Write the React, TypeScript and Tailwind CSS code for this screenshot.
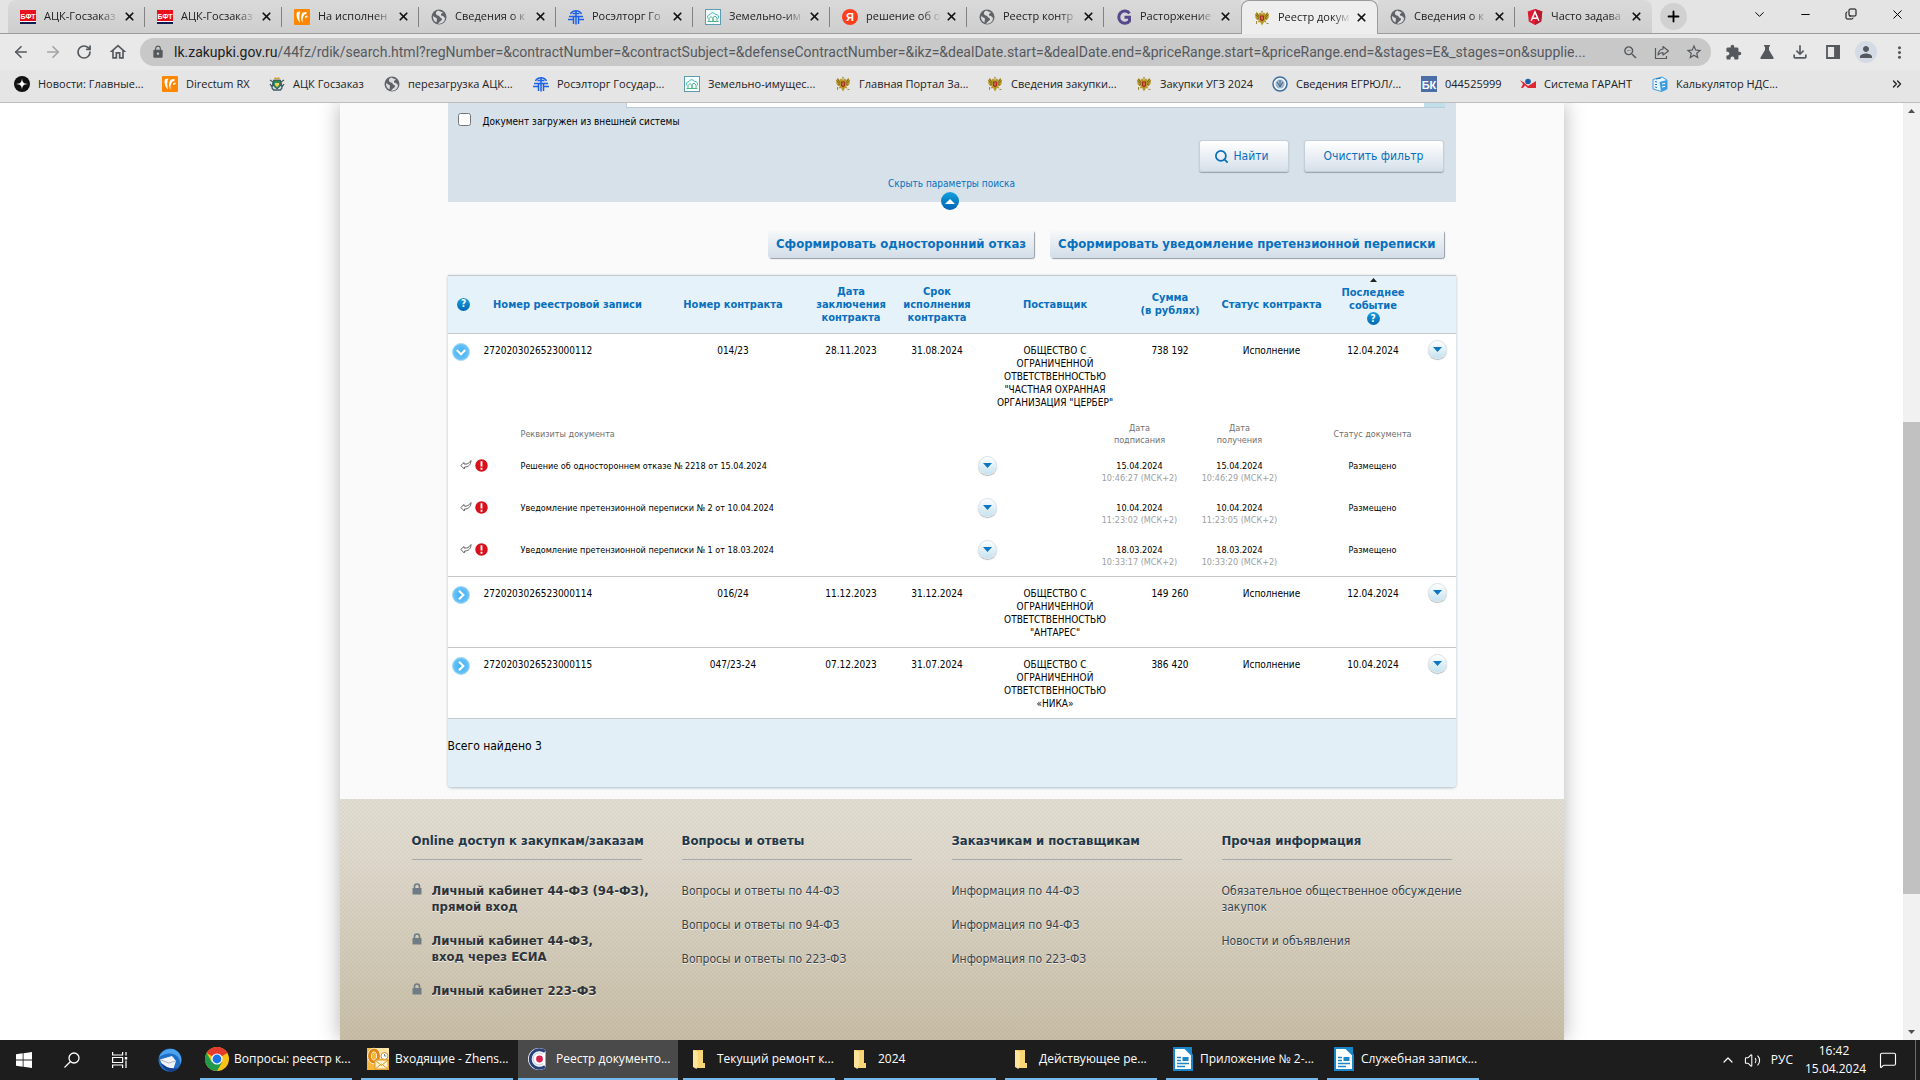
import type { ReactNode } from "react";
import {
  ArrowLeft,
  ArrowRight,
  ChevronDown,
  ChevronUp,
  ChevronsRight,
  Copy,
  MessageSquare,
  Minus,
  Plus,
  RotateCw,
  Search,
  Volume2,
  X,
} from "lucide-react";
import {
  MdExtension,
  MdLock,
  MdMoreVert,
  MdOutlineFileDownload,
  MdOutlineHome,
  MdPerson,
  MdStarOutline,
  MdZoomOut,
} from "react-icons/md";
import clsx from "clsx";

type IconName =
  | "bft"
  | "directum"
  | "globe"
  | "roseltorg"
  | "land"
  | "yandex"
  | "g"
  | "eagle"
  | "angular"
  | "news"
  | "crest"
  | "egrul"
  | "bk"
  | "garant"
  | "calc";

const tabs: { icon: IconName; title: string; active?: boolean }[] = [
  { icon: "bft", title: "АЦК-Госзаказ" },
  { icon: "bft", title: "АЦК-Госзаказ" },
  { icon: "directum", title: "На исполнен" },
  { icon: "globe", title: "Сведения о к" },
  { icon: "roseltorg", title: "Росэлторг Го" },
  { icon: "land", title: "Земельно-им" },
  { icon: "yandex", title: "решение об о" },
  { icon: "globe", title: "Реестр контр" },
  { icon: "g", title: "Расторжение" },
  { icon: "eagle", title: "Реестр докум", active: true },
  { icon: "globe", title: "Сведения о к" },
  { icon: "angular", title: "Часто задава" },
];

const bookmarks: { icon: IconName; title: string; width: string }[] = [
  { icon: "news", title: "Новости: Главные...", width: "w-[148px]" },
  { icon: "directum", title: "Directum RX", width: "w-[107px]" },
  { icon: "crest", title: "АЦК Госзаказ", width: "w-[115px]" },
  { icon: "globe", title: "перезагрузка АЦК...", width: "w-[149px]" },
  { icon: "roseltorg", title: "Росэлторг Государ...", width: "w-[151px]" },
  { icon: "land", title: "Земельно-имущес...", width: "w-[151px]" },
  { icon: "eagle", title: "Главная Портал За...", width: "w-[152px]" },
  { icon: "eagle", title: "Сведения закупки...", width: "w-[149px]" },
  { icon: "eagle", title: "Закупки УГЗ 2024", width: "w-[136px]" },
  { icon: "egrul", title: "Сведения ЕГРЮЛ/...", width: "w-[149px]" },
  { icon: "bk", title: "044525999", width: "w-[99px]" },
  { icon: "garant", title: "Система ГАРАНТ", width: "w-[132px]" },
  { icon: "calc", title: "Калькулятор НДС...", width: "w-[136px]" },
];

type Doc = { title: string; signed: [string, string]; received: [string, string] };

type Contract = {
  id: string;
  number: string;
  date: string;
  term: string;
  supplier: string[];
  sum: string;
  event: string;
  docs?: Doc[];
};

const contracts: Contract[] = [
  {
    id: "2720203026523000112",
    number: "014/23",
    date: "28.11.2023",
    term: "31.08.2024",
    supplier: ["ОБЩЕСТВО С", "ОГРАНИЧЕННОЙ", "ОТВЕТСТВЕННОСТЬЮ", '"ЧАСТНАЯ ОХРАННАЯ', 'ОРГАНИЗАЦИЯ "ЦЕРБЕР"'],
    sum: "738 192",
    event: "12.04.2024",
    docs: [
      {
        title: "Решение об одностороннем отказе № 2218 от 15.04.2024",
        signed: ["15.04.2024", "10:46:27 (МСК+2)"],
        received: ["15.04.2024", "10:46:29 (МСК+2)"],
      },
      {
        title: "Уведомление претензионной переписки № 2 от 10.04.2024",
        signed: ["10.04.2024", "11:23:02 (МСК+2)"],
        received: ["10.04.2024", "11:23:05 (МСК+2)"],
      },
      {
        title: "Уведомление претензионной переписки № 1 от 18.03.2024",
        signed: ["18.03.2024", "10:33:17 (МСК+2)"],
        received: ["18.03.2024", "10:33:20 (МСК+2)"],
      },
    ],
  },
  {
    id: "2720203026523000114",
    number: "016/24",
    date: "11.12.2023",
    term: "31.12.2024",
    supplier: ["ОБЩЕСТВО С", "ОГРАНИЧЕННОЙ", "ОТВЕТСТВЕННОСТЬЮ", '"АНТАРЕС"'],
    sum: "149 260",
    event: "12.04.2024",
  },
  {
    id: "2720203026523000115",
    number: "047/23-24",
    date: "07.12.2023",
    term: "31.07.2024",
    supplier: ["ОБЩЕСТВО С", "ОГРАНИЧЕННОЙ", "ОТВЕТСТВЕННОСТЬЮ", "«НИКА»"],
    sum: "386 420",
    event: "10.04.2024",
  },
];

const footerColumns: { title: string; locked?: boolean; links: string[][] }[] = [
  {
    title: "Online доступ к закупкам/заказам",
    locked: true,
    links: [["Личный кабинет 44-ФЗ (94-ФЗ),", "прямой вход"], ["Личный кабинет 44-ФЗ,", "вход через ЕСИА"], ["Личный кабинет 223-ФЗ"]],
  },
  {
    title: "Вопросы и ответы",
    links: [["Вопросы и ответы по 44-ФЗ"], ["Вопросы и ответы по 94-ФЗ"], ["Вопросы и ответы по 223-ФЗ"]],
  },
  {
    title: "Заказчикам и поставщикам",
    links: [["Информация по 44-ФЗ"], ["Информация по 94-ФЗ"], ["Информация по 223-ФЗ"]],
  },
  {
    title: "Прочая информация",
    links: [["Обязательное общественное обсуждение", "закупок"], ["Новости и объявления"]],
  },
];

const taskButtons: { icon: "chrome" | "outlook" | "chromium" | "folder" | "doc"; title: string; active?: boolean }[] = [
  { icon: "chrome", title: "Вопросы: реестр к..." },
  { icon: "outlook", title: "Входящие - Zhens..." },
  { icon: "chromium", title: "Реестр документо...", active: true },
  { icon: "folder", title: "Текущий ремонт к..." },
  { icon: "folder", title: "2024" },
  { icon: "folder", title: "Действующее ре..." },
  { icon: "doc", title: "Приложение № 2-..." },
  { icon: "doc", title: "Служебная записк..." },
];

function SiteIcon({ name }: { name: IconName }) {
  const box = "h-4 w-4 shrink-0";
  switch (name) {
    case "bft":
      return (
        <svg viewBox="0 0 16 16" className={box}>
          <path d="M0 1h16v11H0z" fill="#e8101c" />
          <path d="M0 12h16v1H0z" fill="#fff" />
          <path d="M0 13h16v2H0z" fill="#101c50" />
          <text x="8" y="9.5" textAnchor="middle" fontSize="7" fontWeight="700" fill="#fff" fontFamily="Liberation Sans, sans-serif">БФТ</text>
        </svg>
      );
    case "directum":
      return (
        <svg viewBox="0 0 16 16" className={box}>
          <rect width="16" height="16" rx="1" fill="#ff8700" />
          <path d="M6 13.500C2.500 10 2 6 3 3l3.500-.5L5.800 4C5 7 5.200 10 6 13.500z" fill="#fff" />
          <path d="M8.500 13.500C6.500 10 6.800 5.500 9 3.500L12.500 3v2l-2 .5C9 7.500 8.300 10 8.500 13.500z" fill="#fff" />
          <path d="M11 9l2.500-.8V6.500L11 7.200z" fill="#fff" />
        </svg>
      );
    case "globe":
      return (
        <svg viewBox="0 0 16 16" className={box}>
          <circle cx="8" cy="8" r="7.500" fill="#5f6368" />
          <path d="M7 1.500C4 3 4.500 6 7 6.500c2 .5 1.500 2 3 2.500s1.500 2-1 3.500l-2 2c3.500 1 7-2 7-5.500L12 7l-2-.5V5l2-1.500z" fill="#dcdcdc" />
          <path d="M2 7l4 2.500-.5 4C3 12.500 1.800 10 2 7z" fill="#dcdcdc" />
        </svg>
      );
    case "roseltorg":
      return (
        <svg viewBox="0 0 16 16" className={box} fill="none" stroke="#1c62e8" strokeWidth="1.500">
          <path d="M2.500 5a6 5.500 0 0 1 11 0M4.500 4.500h7M1 7.500h14M0 10.500h6M10 10.500h6M8 1v14.500M5.500 7.500V15M10.500 7.500V15" />
        </svg>
      );
    case "land":
      return (
        <svg viewBox="0 0 16 16" className={box} fill="none">
          <rect x=".5" y=".5" width="15" height="15" fill="#f7fdfd" stroke="#5b9cb0" />
          <path d="M3 9.500a2.500 2.500 0 0 1 2-4 3 3 0 0 1 5.500 0 2.500 2.500 0 0 1 2.500 4" stroke="#3fb8bd" />
          <path d="M4 12V9.500l2-2 2 2V12M8 12V8.500L10 7l2 2V12M2.500 12.500h11" stroke="#51b58b" />
        </svg>
      );
    case "yandex":
      return (
        <svg viewBox="0 0 16 16" className={box}>
          <circle cx="8" cy="8" r="8" fill="#fc3f1d" />
          <text x="8" y="12" textAnchor="middle" fontSize="11" fontWeight="700" fill="#fff" fontFamily="Liberation Sans, sans-serif">Я</text>
        </svg>
      );
    case "g":
      return (
        <svg viewBox="0 0 16 16" className={box}>
          <path d="M13.500 4.300A6 6.200 0 1 0 13.500 12V8.300H8.500" fill="none" stroke="#56488a" strokeWidth="3" />
        </svg>
      );
    case "eagle":
      return (
        <svg viewBox="0 0 16 16" className={box}>
          <path d="M8 .5l1 1.500-1 1-1-1z" fill="#a8842a" />
          <path d="M7.500 3.500 6 2.500 4.500 4l1 1.500L2.500 1.500 2 4 .8 3.500 1.500 7l-.7-.2L3 10l2-.5-1.500 3L6 12l2 3.500L10 12l2.500.5-1.500-3 2 .5 2.200-3.200-.7.2.7-3.500L14 4l-.5-2.500-3 4 1-1.500L10 2.500 8.500 3.500z" fill="#b99a2c" />
          <path d="M2.500 3 5 6.500M1.800 5l3 2.500M13.500 3 11 6.500M14.200 5l-3 2.500M3 9l2-.5M13 9l-2-.5" fill="none" stroke="#6b5613" strokeWidth=".7" />
          <path d="M6 5.500h4v4l-2 2-2-2z" fill="#a92a1c" />
          <path d="M8 6.500v3" stroke="#eadcae" strokeWidth=".8" />
          <path d="M2.500 11v3M12.500 13.500h2" stroke="#9b8a4a" />
        </svg>
      );
    case "angular":
      return (
        <svg viewBox="0 0 16 16" className={box}>
          <path d="M8 0 .7 2.600l1.100 9.800L8 16l6.200-3.600 1.100-9.800z" fill="#dd1b35" />
          <path d="M8 0v16l6.200-3.600 1.100-9.800z" fill="#b8192d" />
          <path d="M4.200 11.800 8 3l3.800 8.800M5.500 9.300h5" fill="none" stroke="#fff" strokeWidth="1.500" />
        </svg>
      );
    case "news":
      return (
        <svg viewBox="0 0 16 16" className={box}>
          <circle cx="8" cy="8" r="8" fill="#111" />
          <path d="M8 2c.3 4.500 1.500 5.700 6 6-4.500.3-5.700 1.500-6 6-.3-4.500-1.500-5.700-6-6 4.500-.3 5.700-1.500 6-6z" fill="#fff" />
        </svg>
      );
    case "crest":
      return (
        <svg viewBox="0 0 16 16" className={box}>
          <path d="M5 3l1-2 2 1 2-1 1 2z" fill="#d3a52a" />
          <path d="M4.500 4h7v6L8 13l-3.500-3z" fill="#2c8d57" stroke="#333" strokeWidth=".7" />
          <path d="M6 7h4v2L8 11 6 9z" fill="#efd559" />
          <path d="M1 4l3 2-1 6 2 2.500M15 4l-3 2 1 6-2 2.500M1 8l2 3M15 8l-2 3M5 14h6" fill="none" stroke="#3e5c6f" strokeWidth="1.300" />
        </svg>
      );
    case "egrul":
      return (
        <svg viewBox="0 0 16 16" className={box}>
          <circle cx="8" cy="8" r="7" fill="#f3f6fa" stroke="#3a6ea5" strokeWidth="1.500" />
          <circle cx="8" cy="8" r="4.500" fill="#9fb6cd" />
          <path d="M5 6l3 5 3-5M8 4v7" stroke="#44678c" fill="none" />
        </svg>
      );
    case "bk":
      return (
        <svg viewBox="0 0 16 16" className={box}>
          <path d="M0 0h16v16H0z" fill="#4a6fa8" />
          <text x="8" y="12.500" textAnchor="middle" fontSize="11" fontWeight="700" fill="#fff" fontFamily="Liberation Sans, sans-serif">БК</text>
        </svg>
      );
    case "garant":
      return (
        <svg viewBox="0 0 16 16" className={box}>
          <path d="M0 4l4 2.500 4 3.500 8-5v7H8L5 9.500 3 12H1l2-4z" fill="#e22832" />
          <circle cx="8" cy="5.500" r="2.800" fill="#1a5faf" />
        </svg>
      );
    case "calc":
      return (
        <svg viewBox="0 0 16 16" className={box} strokeLinejoin="round">
          <path d="M1 3.500 10 1l5 3v9l-5.500 2.500L1 13z" fill="#e7f4fd" stroke="#3e9ee2" />
          <path d="M7.500 6 15 4v9l-6 2.500z" fill="#3e9ee2" />
          <path d="M3 5.500l2 .5M3 8.500h2M3 11l2 .5M4 3l5-1" stroke="#1d79c4" />
          <path d="M10 8l3-.7M10 11l3-.7" stroke="#fff" />
        </svg>
      );
  }
}

function TabStrip() {
  return (
    <div className="flex h-[34px] items-start border-b border-[#9b9b9b] bg-[#e4e4e4] pl-2">
      {tabs.map((tab, i) => {
        const hideDivider = tab.active || tabs[i + 1]?.active || i === tabs.length - 1;
        return (
          <div
            key={i}
            className={clsx(
              "flex w-[137px] shrink-0 items-center pl-3 pr-[9px]",
              tab.active
                ? "h-[34px] rounded-t-lg border border-b-0 border-[#9b9b9b] bg-[#eeeeee]"
                : "h-[33px] bg-linear-to-b from-[#dadada] to-[#cecece]",
              i === 0 && "rounded-tl-lg",
              i === tabs.length - 1 && "rounded-tr-lg"
            )}
          >
            <SiteIcon name={tab.icon} />
            <span className="ml-2 flex-1 whitespace-nowrap text-[11px] text-[#202124] [mask-image:linear-gradient(to_right,black_75%,transparent)]">
              {tab.title}
            </span>
            <button type="button" aria-label="Закрыть вкладку" className="ml-1 text-[#111]">
              <X size={13} strokeWidth={3.2} />
            </button>
            <span className={clsx("-mr-[9px] ml-[8px] h-5 w-px", hideDivider ? "bg-transparent" : "bg-[#828282]")} />
          </div>
        );
      })}
      <button type="button" aria-label="Новая вкладка" className="ml-2 mt-[3px] flex h-[27px] w-[27px] items-center justify-center rounded-full bg-[#d1d1d1]">
        <Plus size={17} strokeWidth={2.6} />
      </button>
      <div className="ml-auto flex h-7 items-center text-black">
        <button type="button" aria-label="Поиск вкладок" className="flex w-[46px] justify-center"><ChevronDown size={15} strokeWidth={1.6} /></button>
        <button type="button" aria-label="Свернуть" className="flex w-[46px] justify-center"><Minus size={13} strokeWidth={1.8} /></button>
        <button type="button" aria-label="Восстановить" className="flex w-[46px] justify-center"><Copy size={12} strokeWidth={2} className="-scale-x-100 rotate-180" /></button>
        <button type="button" aria-label="Закрыть" className="flex w-[46px] justify-center"><X size={15} strokeWidth={1.6} /></button>
      </div>
    </div>
  );
}

function AddressBar() {
  return (
    <div className="flex h-9 items-center bg-[#e9e9e9] pl-3 pr-1 text-[#55595e]">
      <button type="button" aria-label="Назад" className="w-8"><ArrowLeft size={18} strokeWidth={2.2} /></button>
      <button type="button" aria-label="Вперёд" className="w-8 text-[#a3a3a3]"><ArrowRight size={18} strokeWidth={2.2} /></button>
      <button type="button" aria-label="Обновить" className="w-8"><RotateCw size={16} strokeWidth={2.6} /></button>
      <button type="button" aria-label="Домашняя страница" className="w-8"><MdOutlineHome size={20} /></button>
      <div className="flex h-7 min-w-0 flex-1 items-center rounded-full bg-[#c8c8c8] pl-[11px] pr-px">
        <MdLock size={14} className="mr-[9px] shrink-0" />
        <div className="min-w-0 flex-1 overflow-hidden whitespace-nowrap font-['Roboto','Noto_Sans',sans-serif] text-[14px]">
          <span className="text-[#202124]">lk.zakupki.gov.ru</span>
          /44fz/rdik/search.html?regNumber=&amp;contractNumber=&amp;contractSubject=&amp;defenseContractNumber=&amp;ikz=&amp;dealDate.start=&amp;dealDate.end=&amp;priceRange.start=&amp;priceRange.end=&amp;stages=E&amp;_stages=on&amp;supplie...
        </div>
        <button type="button" aria-label="Масштаб" className="flex w-8 justify-center"><MdZoomOut size={17} /></button>
        <button type="button" aria-label="Поделиться" className="flex w-8 justify-center">
          <svg viewBox="0 0 16 16" className="h-4 w-4" fill="none" stroke="currentColor" strokeWidth="1.200">
            <path d="M1.500 4v10.500h11V12M9 2.500 14.500 7 9 11V8.700C6.500 8.700 5 9.500 4 11c.3-3.500 2-5.700 5-6z" strokeLinejoin="round" />
          </svg>
        </button>
        <button type="button" aria-label="В закладки" className="flex w-8 justify-center"><MdStarOutline size={18} /></button>
      </div>
      <div className="ml-[6px] flex items-center">
        <button type="button" aria-label="Расширения" className="flex w-[33px] justify-center"><MdExtension size={17} /></button>
        <button type="button" aria-label="Эксперименты" className="flex w-[33px] justify-center">
          <svg viewBox="0 0 16 16" className="h-4 w-4" fill="currentColor"><path d="M5 1h6v1.500h-1V6l4.500 7.500c.4.800 0 1.500-.9 1.500H2.400c-.9 0-1.300-.7-.9-1.500L6 6V2.500H5z" /></svg>
        </button>
        <button type="button" aria-label="Загрузки" className="flex w-[33px] justify-center"><MdOutlineFileDownload size={20} /></button>
        <button type="button" aria-label="Боковая панель" className="flex w-[33px] justify-center">
          <svg viewBox="0 0 14 14" className="h-[14px] w-[14px]" fill="none" stroke="currentColor" strokeWidth="1.800"><path d="M1 1h12v12H1z" /><path d="M9 1h4v12H9z" fill="currentColor" /></svg>
        </button>
        <button type="button" aria-label="Профиль" className="mx-[6px] flex h-[22px] w-[22px] items-center justify-center rounded-full bg-[#d5dbe5]"><MdPerson size={18} /></button>
        <button type="button" aria-label="Меню" className="flex w-[33px] justify-center"><MdMoreVert size={19} /></button>
      </div>
    </div>
  );
}

function BookmarksBar() {
  return (
    <nav className="flex h-[33px] items-center border-b border-[#bdbdbd] bg-[#e5e5e5] pb-1 pl-[14px] text-[11px] text-[#202124]">
      {bookmarks.map((b, i) => (
        <a key={i} href="#" className={clsx("flex items-center gap-2 whitespace-nowrap", b.width)}>
          <SiteIcon name={b.icon} />
          {b.title}
        </a>
      ))}
      <button type="button" aria-label="Другие закладки" className="ml-auto mr-4"><ChevronsRight size={14} strokeWidth={2.4} /></button>
    </nav>
  );
}

function HelpBadge() {
  return (
    <button type="button" aria-label="Справка" className="flex h-[13px] w-[13px] items-center justify-center rounded-full bg-linear-to-b from-[#1aa0dc] to-[#0566b4] text-[10px] font-bold leading-none text-white">
      ?
    </button>
  );
}

function MenuButton() {
  return (
    <button type="button" aria-label="Действия" className="inline-flex h-[19px] w-[19px] items-center justify-center rounded-full border border-[#dbe4e9] bg-linear-to-b from-white to-[#c4e3f0] shadow-[0_1px_1px_#a9b4bb]">
      <svg viewBox="0 0 9 5" className="h-[5px] w-[9px]"><path d="M0 0h9L4.500 5z" fill="#0a76c4" /></svg>
    </button>
  );
}

function ExpandButton({ open }: { open: boolean }) {
  return (
    <button type="button" aria-expanded={open} aria-label="Документы" className="flex h-[18px] w-[18px] items-center justify-center rounded-full border border-[#a9dbf6] bg-radial from-[#3aaef4] to-[#7cccf8]">
      <svg viewBox="0 0 10 10" className={clsx("h-[10px] w-[10px]", open && "rotate-90")} fill="none" stroke="#fff" strokeWidth="2.200">
        <path d="M3 .8 7.300 5 3 9.200" />
      </svg>
    </button>
  );
}

function DocIcons() {
  return (
    <div className="flex items-center gap-[3px]">
      <svg viewBox="0 0 12 12" className="h-3 w-3" fill="#fff" stroke="#666" strokeWidth="1">
        <path d="M.8 6.500 4 3.500V5c3 .5 5-.5 7-3.500C11 5.500 8.500 8.200 4.500 8l-.2 2z" strokeLinejoin="round" />
      </svg>
      <svg viewBox="0 0 14 14" className="h-[13px] w-[13px]">
        <circle cx="7" cy="7" r="6.700" fill="#d8111b" />
        <path d="M7 2.500v5.500M7 9.500v2" stroke="#fff" strokeWidth="2" />
      </svg>
    </div>
  );
}

function DocumentsTable({ docs }: { docs: Doc[] }) {
  return (
    <table className="w-full table-fixed text-center text-[9px] leading-3">
      <colgroup>
        <col className="w-[73px]" />
        <col />
        <col className="w-[41px]" />
        <col className="w-[82px]" />
        <col className="w-[100px]" />
        <col className="w-[100px]" />
        <col className="w-[166px]" />
      </colgroup>
      <thead>
        <tr className="h-[35px] text-[#707070]">
          <th />
          <th className="text-left font-normal">Реквизиты документа</th>
          <th />
          <th />
          <th className="font-normal">Дата<br />подписания</th>
          <th className="font-normal">Дата<br />получения</th>
          <th className="font-normal">Статус документа</th>
        </tr>
      </thead>
      <tbody>
        {docs.map((doc) => (
          <tr key={doc.title} className="h-[42px] align-top last:h-10">
            <td className="pl-3 pt-[7px]"><DocIcons /></td>
            <td className="pt-2 text-left">{doc.title}</td>
            <td className="pt-1"><MenuButton /></td>
            <td />
            <td className="pt-2">{doc.signed[0]}<div className="text-[#a0a0a0]">{doc.signed[1]}</div></td>
            <td className="pt-2">{doc.received[0]}<div className="text-[#a0a0a0]">{doc.received[1]}</div></td>
            <td className="pt-2">Размещено</td>
          </tr>
        ))}
      </tbody>
    </table>
  );
}

function ContractRows({ contract }: { contract: Contract }) {
  const { docs } = contract;
  return (
    <>
      <tr className={clsx("align-top", !docs && "border-b border-[#c6c9cb]")}>
        <td className="pl-1 pt-[9px]"><ExpandButton open={Boolean(docs)} /></td>
        <td className="pl-1 pt-[10px] text-left">{contract.id}</td>
        <td className="pt-[10px]">{contract.number}</td>
        <td className="pt-[10px]">{contract.date}</td>
        <td className="pt-[10px]">{contract.term}</td>
        <td className="pb-2 pt-[10px]">
          {contract.supplier.map((line) => <div key={line} className="whitespace-nowrap">{line}</div>)}
        </td>
        <td className="pt-[10px]">{contract.sum}</td>
        <td className="pt-[10px]">Исполнение</td>
        <td className="pt-[10px]">{contract.event}</td>
        <td className="pl-1 pt-[6px]"><MenuButton /></td>
      </tr>
      {docs ? (
        <tr className="border-b border-[#c6c9cb]">
          <td colSpan={10}><DocumentsTable docs={docs} /></td>
        </tr>
      ) : null}
    </>
  );
}

function ContractsTable() {
  return (
    <div className="overflow-hidden rounded-b border-t border-[#c6c9cb] bg-white shadow-[0_1px_3px_#a9bcc6]">
      <table className="w-full table-fixed border-collapse text-center text-[10px] leading-[13px] text-black">
        <colgroup>
          <col className="w-8" />
          <col className="w-[176px]" />
          <col className="w-[155px]" />
          <col className="w-[81px]" />
          <col className="w-[91px]" />
          <col />
          <col className="w-[85px]" />
          <col className="w-[118px]" />
          <col className="w-[85px]" />
          <col className="w-10" />
        </colgroup>
        <thead>
          <tr className="h-[57px] border-b border-[#c6c9cb] bg-[#e5f2fa] text-[11px] text-[#0870be]">
            <th><div className="flex justify-center"><HelpBadge /></div></th>
            <th>Номер реестровой записи</th>
            <th>Номер контракта</th>
            <th>Дата<br />заключения<br />контракта</th>
            <th>Срок<br />исполнения<br />контракта</th>
            <th>Поставщик</th>
            <th>Сумма<br />(в рублях)</th>
            <th>Статус контракта</th>
            <th className="pt-[2px] align-top">
              <svg viewBox="0 0 7 4" className="mx-auto mb-1 h-1 w-[7px]"><path d="M0 4h7L3.500 0z" fill="#222" /></svg>
              Последнее<br />событие
              <div className="flex justify-center"><HelpBadge /></div>
            </th>
            <th />
          </tr>
        </thead>
        <tbody>
          {contracts.map((c) => <ContractRows key={c.id} contract={c} />)}
        </tbody>
      </table>
      <div className="h-[68px] bg-[#e3eff6] pt-[18px] text-[12px] leading-[18px]">Всего найдено 3</div>
    </div>
  );
}

function FilterPanel() {
  return (
    <form className="bg-[#d6e1ea]" onSubmit={(e) => e.preventDefault()}>
      <div className="ml-[178px] mr-[11px] flex h-[5px] justify-end border-b border-l border-[#bccbd6] bg-white">
        <span className="h-1 w-[21px] bg-[#bfdfea]" />
      </div>
      <div className="flex items-start pl-[10px] pt-[5px] text-[10px] leading-[18px]">
        <input id="external" type="checkbox" className="h-[13px] w-[13px]" />
        <label htmlFor="external" className="ml-3">Документ загружен из внешней системы</label>
      </div>
      <div className="flex justify-end gap-[15px] pr-3 pt-[9px] text-[12px] text-[#0870be]">
        <button type="submit" className="flex h-8 w-[90px] items-center justify-center gap-1 rounded-[3px] border border-[#c3ced7] bg-linear-to-b from-white to-[#d6e0ea] pr-1 shadow-[0_1px_1px_#97a3ad]">
          <Search size={15} strokeWidth={2.8} />
          Найти
        </button>
        <button type="reset" className="h-8 w-[140px] rounded-[3px] border border-[#c3ced7] bg-linear-to-b from-white to-[#d6e0ea] shadow-[0_1px_1px_#97a3ad]">
          Очистить фильтр
        </button>
      </div>
      <div className="relative flex h-[30px] justify-center pt-1 text-[10px] leading-4">
        <a href="#" className="text-[#0870be]">Скрыть параметры поиска</a>
        <button type="button" aria-label="Скрыть параметры поиска" className="absolute -bottom-2 left-1/2 -ml-[11px] flex h-[18px] w-[18px] items-center justify-center rounded-full bg-linear-to-b from-[#12a1de] to-[#0663b3]">
          <svg viewBox="0 0 10 5" className="h-[5px] w-[10px]"><path d="M0 5h10L5 0z" fill="#fff" /></svg>
        </button>
      </div>
    </form>
  );
}

function ActionButton({ children }: { children: ReactNode }) {
  return (
    <button type="button" className="h-7 rounded-[3px] bg-linear-to-b from-[#f8f9fa] to-[#d2dde8] px-2 text-[13px] font-bold text-[#0870be] shadow-[1px_1px_1px_#959ca3]">
      {children}
    </button>
  );
}

function PageFooter() {
  return (
    <footer className="grid flex-1 grid-cols-4 content-start bg-[repeating-conic-gradient(#00000008_0_25%,transparent_0_50%),linear-gradient(#e2dfd2,#dfd9cc_25%,#c8bea7)] bg-[length:4px_4px,auto] pl-[72px] pr-[72px] pt-[34px] text-[12px] leading-4 text-[#37424b] [text-shadow:0_1px_0_#f2efe8]">
      {footerColumns.map((col) => (
        <div key={col.title}>
          <h3 className="mr-10 whitespace-nowrap border-b border-[#a4abae] pb-[10px] text-[13px] font-bold leading-4 text-[#233747]">{col.title}</h3>
          <ul className="mt-[23px] space-y-[18px]">
            {col.links.map((lines) => (
              <li key={lines[0]} className="flex">
                {col.locked ? (
                  <svg viewBox="0 0 10 12" className="mr-[10px] h-3 w-[10px] shrink-0">
                    <path d="M2.500 6V3.500a2.500 2.500 0 0 1 5 0V6" fill="none" stroke="#707c85" strokeWidth="1.600" />
                    <path d="M.5 5h9v6.500h-9z" fill="#707c85" />
                  </svg>
                ) : null}
                <a href="#" className={clsx("whitespace-nowrap", col.locked && "text-[13px] font-bold leading-4 text-[#2e3439]")}>
                  {lines.map((line) => <span key={line} className="block">{line}</span>)}
                </a>
              </li>
            ))}
          </ul>
        </div>
      ))}
    </footer>
  );
}

function Scrollbar() {
  return (
    <div className="flex w-[17px] shrink-0 flex-col items-center bg-[#f1f1f1] py-[6px]">
      <svg viewBox="0 0 7 4" className="h-1 w-[7px]"><path d="M0 4h7L3.500 0z" fill="#505050" /></svg>
      <div className="flex w-full flex-1 flex-col">
        <div className="flex-[309]" />
        <div className="w-full flex-[472] bg-[#c1c1c1]" />
        <div className="flex-[136]" />
      </div>
      <svg viewBox="0 0 7 4" className="h-1 w-[7px]"><path d="M0 0h7L3.500 4z" fill="#505050" /></svg>
    </div>
  );
}

function TaskIcon({ name }: { name: (typeof taskButtons)[number]["icon"] }) {
  const box = "h-6 w-6 shrink-0";
  switch (name) {
    case "chrome":
      return (
        <svg viewBox="0 0 24 24" className={box}>
          <circle cx="12" cy="12" r="12" fill="#fbc116" />
          <path d="M12 12 1.600 6a12 12 0 0 1 20.800 0z" fill="#e33b2e" />
          <path d="M1.600 6A12 12 0 0 0 12 24l5.200-9L12 12 6.800 15z" fill="#229a4b" />
          <circle cx="12" cy="12" r="5.600" fill="#fff" />
          <circle cx="12" cy="12" r="4.400" fill="#1a73e8" />
        </svg>
      );
    case "outlook":
      return (
        <svg viewBox="0 0 24 24" className={box}>
          <path d="M1 1h22v22H1z" fill="#f6b73c" />
          <path d="M11 1h12v11H11z" fill="#fbe6a8" />
          <ellipse cx="8" cy="9" rx="4.500" ry="6" fill="none" stroke="#fff" strokeWidth="4.500" />
          <ellipse cx="8" cy="9" rx="4.500" ry="6" fill="none" stroke="#e08a12" strokeWidth="3" />
          <circle cx="18.500" cy="9" r="3.500" fill="#fff" stroke="#dd8b1d" />
          <path d="M18.500 7v2h2" fill="none" stroke="#666" strokeWidth=".8" />
          <path d="M9 13h13v9H9z" fill="#fff3cf" stroke="#d69a2b" />
          <path d="M9 22l6.500-5L22 22M9 13l6.500 5.500L22 13" fill="none" stroke="#d69a2b" />
        </svg>
      );
    case "chromium":
      return (
        <svg viewBox="0 0 24 24" className={box}>
          <circle cx="12" cy="12" r="11" fill="#fff" />
          <path d="M18 4.500A9.300 9.300 0 1 0 18 19.500" fill="none" stroke="#27427c" strokeWidth="3" />
          <path d="M16 7.500a6 6 0 1 0 0 9" fill="none" stroke="#c9cfdb" strokeWidth="1.200" />
          <path d="M18.500 3v18H24V3z" fill="#4a4a4a" />
          <circle cx="12.500" cy="12" r="3.400" fill="#d9204d" />
        </svg>
      );
    case "folder":
      return (
        <svg viewBox="0 0 24 24" className={box}>
          <path d="M5 3h10v13h2v5H7z" fill="#f0c55c" />
          <path d="M5 3l5 1.500V19L8.500 22 5 20z" fill="#fde49a" />
          <path d="M10 4.500 15 3v13h2v5h-7z" fill="#f8d675" />
        </svg>
      );
    case "doc":
      return (
        <svg viewBox="0 0 24 24" className={box}>
          <path d="M3 1h11l7 7v15H3z" fill="#fff" stroke="#1c87c7" strokeWidth="2" />
          <path d="M13 0h8v8z" fill="#1c87c7" />
          <path d="M6 10.500h4M6 13.500h4M6 16.500h12M6 19.500h8" stroke="#1c87c7" strokeWidth="1.400" />
          <path d="M11.500 10h6v4h-6z" fill="#1c87c7" />
        </svg>
      );
  }
}

function Taskbar() {
  return (
    <div className="flex h-10 shrink-0 items-stretch bg-[#1d1d1d] text-[12px] text-white">
      <div className="flex w-[196px] shrink-0 items-center">
        <button type="button" aria-label="Пуск" className="flex w-12 justify-center">
          <svg viewBox="0 0 16 16" className="h-4 w-4" fill="#fff"><path d="M0 2.300 6.700 1.300V7.600H0zM7.500 1.200 16 0v7.600H7.500zM0 8.400h6.700v6.300L0 13.700zM7.500 8.400H16V16l-8.500-1.200z" /></svg>
        </button>
        <button type="button" aria-label="Поиск" className="flex w-12 justify-center">
          <svg viewBox="0 0 16 16" className="h-4 w-4" fill="none" stroke="#fff" strokeWidth="1.300"><circle cx="10" cy="6" r="5" /><path d="M6.500 9.500.5 15.500" /></svg>
        </button>
        <button type="button" aria-label="Представление задач" className="flex w-12 justify-center">
          <svg viewBox="0 0 16 16" className="h-4 w-4" fill="none" stroke="#fff" strokeWidth="1.200"><path d="M.6 0v3h10V0M.6 5.500h10v5H.6zM.6 16v-3h10v3M14 0v3.500M14 8.500V16" /><path d="M14 5v2.500" strokeWidth="2.500" /></svg>
        </button>
        <button type="button" aria-label="Thunderbird" className="flex w-[52px] justify-center">
          <svg viewBox="0 0 24 24" className="h-6 w-6">
            <circle cx="12" cy="12" r="11.500" fill="#1f6fc9" />
            <path d="M1 9C4 2 12-1 18 2.500c5 3 6.500 9 4.500 13.500C22 9 17 5 11 5.500 7 6 4 7 1 9z" fill="#4aa3ec" />
            <path d="M2 11.500 14 8l4 5-2.500 7.500L5 19z" fill="#f2f4f7" />
            <path d="M2 11.500 10.500 15 18 13" fill="none" stroke="#aab6c5" />
            <path d="M3 15c1 4 4 7.500 9 8 3 .5 6-.5 8-3-5 1-9 0-11-1z" fill="#123f8e" />
          </svg>
        </button>
      </div>
      <div className="flex min-w-0 gap-px">
        {taskButtons.map((b, i) => (
          <button
            key={i}
            type="button"
            className={clsx("flex w-40 flex-col", b.active ? "bg-[#4a4a4a]" : "px-1")}
          >
            <span className={clsx("flex w-full flex-1 items-center gap-[5px] overflow-hidden whitespace-nowrap", b.active ? "pl-[9px]" : "pl-[5px]")}>
              <TaskIcon name={b.icon} />
              {b.title}
            </span>
            <span className="h-[2px] w-full bg-[#76b9ed]" />
          </button>
        ))}
      </div>
      <div className="ml-auto flex items-center">
        <button type="button" aria-label="Скрытые значки"><ChevronUp size={16} strokeWidth={1.8} /></button>
        <button type="button" aria-label="Громкость" className="ml-2"><Volume2 size={17} strokeWidth={1.5} /></button>
        <span className="ml-[10px]">РУС</span>
        <div className="ml-3 w-[58px] text-center leading-[18px]">
          <div>16:42</div>
          <div>15.04.2024</div>
        </div>
        <button type="button" aria-label="Уведомления" className="ml-4 mr-[18px]"><MessageSquare size={18} strokeWidth={1.5} /></button>
        <span className="mr-1 h-10 w-px bg-[#6a6a6a]" />
      </div>
    </div>
  );
}

export default function App() {
  return (
    <div className="flex h-screen flex-col overflow-hidden font-['Open_Sans','Noto_Sans',sans-serif]">
      <header className="shrink-0">
        <TabStrip />
        <AddressBar />
        <BookmarksBar />
      </header>
      <div className="flex min-h-0 flex-1 bg-white font-['DejaVu_Sans_Condensed','DejaVu_Sans',sans-serif]">
        <main className="flex min-w-0 flex-1 justify-center overflow-hidden">
          <div className="flex w-full max-w-[1224px] flex-col bg-[#fafafa] shadow-[0_0_20px_#b4b4b4]">
            <div className="px-[108px]">
              <FilterPanel />
              <div className="flex justify-end gap-4 pb-[17px] pr-3 pt-7">
                <ActionButton>Сформировать односторонний отказ</ActionButton>
                <ActionButton>Сформировать уведомление претензионной переписки</ActionButton>
              </div>
              <ContractsTable />
            </div>
            <div className="h-3 shrink-0" />
            <PageFooter />
          </div>
        </main>
        <Scrollbar />
      </div>
      <Taskbar />
    </div>
  );
}
